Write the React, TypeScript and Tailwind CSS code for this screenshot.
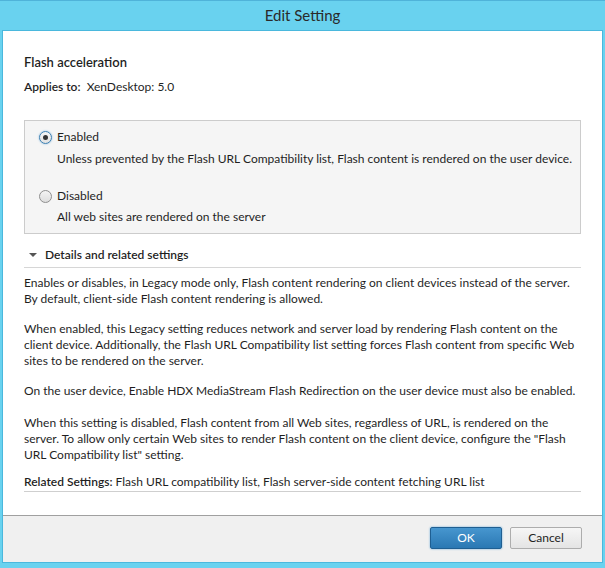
import React from 'react';

const font = { fontFamily: 'Lato, "Noto Sans", sans-serif' };

const Radio: React.FC<{ checked?: boolean }> = ({ checked }) => (
  <span
    className={
      checked
        ? 'flex items-center justify-center w-[13px] h-[13px] rounded-full border border-[#3c7fb1] bg-gradient-to-b from-[#f4f4f4] to-[#e3e3e3] shadow-[0_0_2px_#7fb3db]'
        : 'flex items-center justify-center w-[13px] h-[13px] rounded-full border border-[#8f8f8f] bg-gradient-to-b from-[#f4f4f4] to-[#dedede]'
    }
  >
    {checked && <span className="w-[5px] h-[5px] rounded-full bg-[#333]" />}
  </span>
);

export default function App() {
  return (
    <div
      className="w-[605px] h-[568px] bg-[#69d2ef] border-t border-[#4fb3d9] flex flex-col text-[#1f1f1f]"
      style={font}
    >
      <div className="h-[29px] flex items-center justify-center text-[15px] text-[#2a2a2a]">Edit Setting</div>

      <div className="mx-[2px] flex-1 border border-[#4ab8dd] flex flex-col">
        {/* content */}
        <div className="flex-1 bg-white px-[21px] pt-[22px] text-[12px] leading-[16px] whitespace-nowrap">
          <div className="text-[13px] leading-[18px] font-semibold">Flash acceleration</div>
          <div className="mt-[8px]">
            <span className="font-semibold">Applies to:</span>&nbsp; XenDesktop: 5.0
          </div>

          <div className="mt-[25px] h-[114px] bg-[#f5f5f5] border border-[#cccccc] pl-[14px] pt-[8px]">
            <div className="flex items-center gap-[5px]">
              <Radio checked />
              <span>Enabled</span>
            </div>
            <div className="mt-[6px] pl-[18px]">
              Unless prevented by the Flash URL Compatibility list, Flash content is rendered on the user device.
            </div>
            <div className="mt-[21px] flex items-center gap-[5px]">
              <Radio />
              <span>Disabled</span>
            </div>
            <div className="mt-[5px] pl-[18px]">All web sites are rendered on the server</div>
          </div>

          <div className="mt-[13px] pb-[4px] border-b border-[#d6d6d6] flex items-center">
            <svg width="21" height="16" viewBox="0 0 21 16" className="shrink-0">
              <path d="M5 6 L13 6 L9 10 Z" fill="#555555" />
            </svg>
            <span className="font-semibold">Details and related settings</span>
          </div>

          <p className="mt-[7px]">
            Enables or disables, in Legacy mode only, Flash content rendering on client devices instead of the server.
            <br />
            By default, client-side Flash content rendering is allowed.
          </p>
          <p className="mt-[14px]">
            When enabled, this Legacy setting reduces network and server load by rendering Flash content on the
            <br />
            client device. Additionally, the Flash URL Compatibility list setting forces Flash content from specific Web
            <br />
            sites to be rendered on the server.
          </p>
          <p className="mt-[14px]">
            On the user device, Enable HDX MediaStream Flash Redirection on the user device must also be enabled.
          </p>
          <p className="mt-[16px]">
            When this setting is disabled, Flash content from all Web sites, regardless of URL, is rendered on the
            <br />
            server. To allow only certain Web sites to render Flash content on the client device, configure the "Flash
            <br />
            URL Compatibility list" setting.
          </p>
          <div className="mt-[11px] pb-[1px] border-b border-[#cfcfcf]">
            <span className="font-semibold">Related Settings:</span> Flash URL compatibility list, Flash server-side
            content fetching URL list
          </div>
        </div>

        {/* footer */}
        <div className="h-[47px] bg-[#f0f0f0] border-t border-[#a0a0a0] flex items-start justify-end gap-[8px] pt-[11px] pr-[20px]">
          <button className="w-[72px] h-[22px] rounded-[2px] border border-[#1f5f92] bg-gradient-to-b from-[#4796cf] to-[#2a78b3] text-white text-[12px] shadow-[0_0_2px_#5aa0d5]">
            OK
          </button>
          <button className="w-[72px] h-[22px] rounded-[2px] border border-[#adadad] bg-gradient-to-b from-[#f6f6f6] to-[#e4e4e4] text-[#1f1f1f] text-[12px]">
            Cancel
          </button>
        </div>
      </div>
      <div className="h-[5px]" />
    </div>
  );
}
